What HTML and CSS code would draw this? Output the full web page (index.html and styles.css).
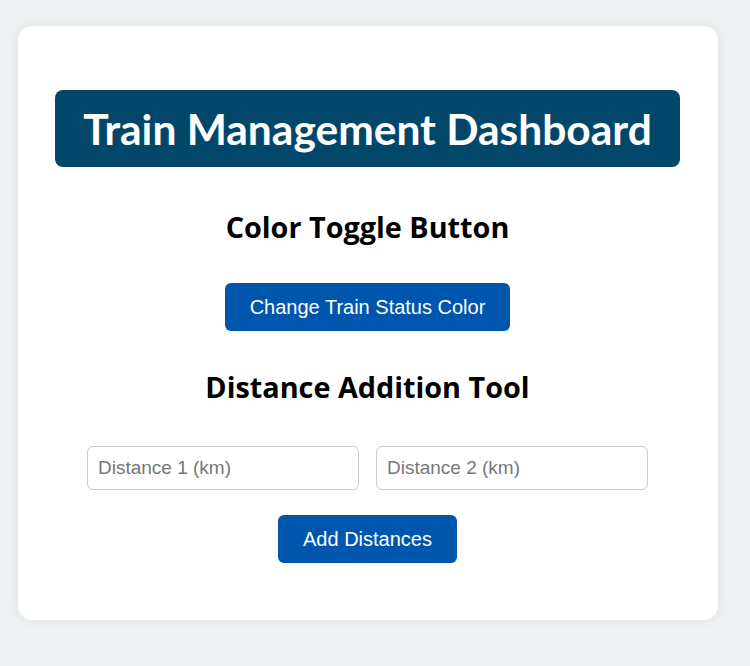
FILE: index.html
```html
<!DOCTYPE html>
<html lang="en">
<head>
<meta charset="utf-8">
<title>Train Management Dashboard</title>
<link rel="stylesheet" href="styles.css">
</head>
<body>
<main class="card">
  <h1 class="title">Train Management Dashboard</h1>
  <section class="tool">
    <h2 class="tool-title">Color Toggle Button</h2>
    <button class="btn btn-toggle" type="button">Change Train Status Color</button>
  </section>
  <section class="tool">
    <h2 class="tool-title">Distance Addition Tool</h2>
    <div class="inputs">
      <input class="field" type="text" placeholder="Distance 1 (km)">
      <input class="field" type="text" placeholder="Distance 2 (km)">
    </div>
    <button class="btn btn-add" type="button">Add Distances</button>
  </section>
</main>
</body>
</html>
```
FILE: styles.css
```css
html, body {
  margin: 0;
  padding: 0;
}
body {
  background: #eef2f3;
  font-family: "Lato", "Open Sans", sans-serif;
  padding: 26px 32px 0 18px;
  height: 666px;
  box-sizing: border-box;
}
.card {
  width: 700px;
  box-sizing: border-box;
  background: #ffffff;
  border-radius: 14px;
  box-shadow: 0 0 12px rgba(0, 0, 0, 0.08);
  padding: 64px 38px 57px 37px;
  display: flex;
  flex-direction: column;
  align-items: center;
}
.title {
  width: 100%;
  box-sizing: border-box;
  margin: 0;
  height: 77px;
  display: flex;
  align-items: center;
  justify-content: center;
  background: #02476a;
  color: #ffffff;
  border-radius: 8px;
  font-size: 42.5px;
  font-weight: 700;
}
.tool {
  display: flex;
  flex-direction: column;
  align-items: center;
}
.tool-title {
  margin: 0;
  font-family: "Open Sans", "Lato", sans-serif;
  font-size: 28.8px;
  font-weight: 700;
  color: #000;
  line-height: 34px;
}
.tool:nth-of-type(1) .tool-title {
  margin-top: 43px;
}
.tool:nth-of-type(2) .tool-title {
  margin-top: 39px;
}
.btn {
  font-family: "Liberation Sans", Arial, sans-serif;
  font-size: 20px;
  color: #ffffff;
  background: #0056ad;
  border: none;
  border-radius: 6px;
  height: 48px;
  padding: 0 25px;
}
.btn-toggle {
  margin-top: 39px;
}
.inputs {
  display: flex;
  gap: 17px;
  margin-top: 42px;
}
.field {
  width: 272px;
  height: 44px;
  box-sizing: border-box;
  border: 1px solid #cccccc;
  border-radius: 6px;
  padding: 0 10px;
  font-family: "Liberation Sans", Arial, sans-serif;
  font-size: 19px;
  color: #333;
}
.field::placeholder {
  color: #777777;
}
.btn-add {
  margin-top: 25px;
}
```
